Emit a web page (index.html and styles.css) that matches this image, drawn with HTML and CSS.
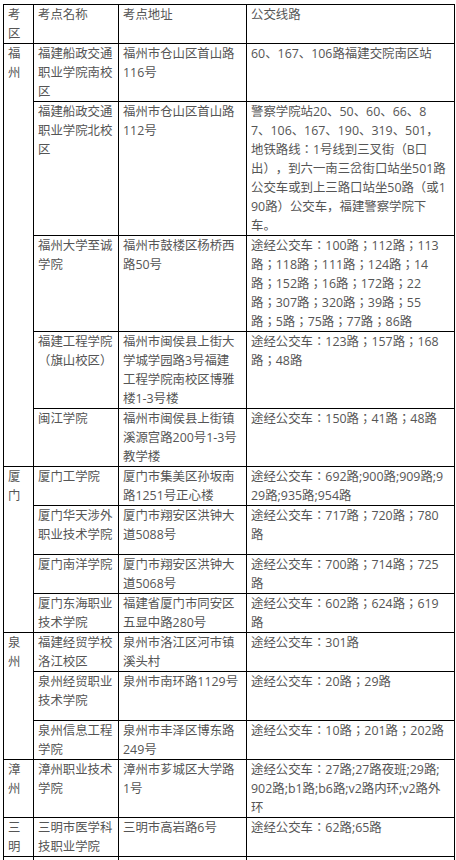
FILE: index.html
```html
<!DOCTYPE html>
<html lang="ja">
<head>
<meta charset="utf-8">
<title>考点公交线路</title>
<link rel="stylesheet" href="styles.css">
</head>
<body>
<table class="grid">
  <colgroup>
    <col class="c1"><col class="c2"><col class="c3"><col class="c4">
  </colgroup>
  <tr>
    <td>考区</td><td>考点名称</td><td class="addr">考点地址</td><td>公交线路</td>
  </tr>
  <tr>
    <td rowspan="5">福州</td>
    <td>福建船政交通职业学院南校区</td>
    <td class="addr">福州市仓山区首山路116号</td>
    <td>60、167、106路福建交院南区站</td>
  </tr>
  <tr>
    <td>福建船政交通职业学院北校区</td>
    <td class="addr">福州市仓山区首山路112号</td>
    <td>警察学院站20、50、60、66、8<br>7、106、167、190、319、501，<br>地铁路线：1号线到三叉街（B口<br>出），到六一南三岔街口站坐501路<br>公交车或到上三路口站坐50路（或1<br>90路）公交车，福建警察学院下<br>车。</td>
  </tr>
  <tr>
    <td>福州大学至诚学院</td>
    <td class="addr">福州市鼓楼区杨桥西路50号</td>
    <td>途经公交车：100路；112路；113<br>路；118路；111路；124路；14<br>路；152路；16路；172路；22<br>路；307路；320路；39路；55<br>路；5路；75路；77路；86路</td>
  </tr>
  <tr>
    <td>福建工程学院（旗山校区）</td>
    <td class="addr">福州市闽侯县上街大学城学园路3号福建工程学院南校区博雅楼1-3号楼</td>
    <td>途经公交车：123路；157路；168<br>路；48路</td>
  </tr>
  <tr>
    <td>闽江学院</td>
    <td class="addr">福州市闽侯县上街镇溪源宫路200号1-3号教学楼</td>
    <td>途经公交车：150路；41路；48路</td>
  </tr>
  <tr>
    <td rowspan="4">厦门</td>
    <td>厦门工学院</td>
    <td class="addr">厦门市集美区孙坂南路1251号正心楼</td>
    <td>途经公交车：692路;900路;909路;9<br>29路;935路;954路</td>
  </tr>
  <tr class="tall">
    <td>厦门华天涉外职业技术学院</td>
    <td class="addr">厦门市翔安区洪钟大道5088号</td>
    <td>途经公交车：717路；720路；780<br>路</td>
  </tr>
  <tr>
    <td>厦门南洋学院</td>
    <td class="addr">厦门市翔安区洪钟大道5068号</td>
    <td>途经公交车：700路；714路；725<br>路</td>
  </tr>
  <tr>
    <td>厦门东海职业技术学院</td>
    <td class="addr">福建省厦门市同安区五显中路280号</td>
    <td>途经公交车：602路；624路；619<br>路</td>
  </tr>
  <tr>
    <td rowspan="3">泉州</td>
    <td>福建经贸学校洛江校区</td>
    <td class="addr">泉州市洛江区河市镇溪头村</td>
    <td>途经公交车：301路</td>
  </tr>
  <tr class="tall">
    <td>泉州经贸职业技术学院</td>
    <td class="addr">泉州市南环路1129号</td>
    <td>途经公交车：20路；29路</td>
  </tr>
  <tr>
    <td>泉州信息工程学院</td>
    <td class="addr">泉州市丰泽区博东路249号</td>
    <td>途经公交车：10路；201路；202路</td>
  </tr>
  <tr>
    <td>漳州</td>
    <td>漳州职业技术学院</td>
    <td class="addr">漳州市芗城区大学路1号</td>
    <td>途经公交车：27路;27路夜班;29路;<br>902路;b1路;b6路;v2路内环;v2路外<br>环</td>
  </tr>
  <tr>
    <td>三明</td>
    <td>三明市医学科技职业学院</td>
    <td class="addr">三明市高岩路6号</td>
    <td>途经公交车：62路;65路</td>
  </tr>
  <tr class="tall">
    <td></td><td></td><td class="addr"></td><td></td>
  </tr>
</table>
</body>
</html>
```

FILE: styles.css
```css
html, body {
  margin: 0;
  padding: 0;
  background: #ffffff;
}

body {
  padding: 4px 0 0 3px;
  font-family: "Open Sans", "Noto Sans CJK JP", "Noto Sans CJK SC", sans-serif;
  font-size: 12.4px;
  line-height: 19px;
  color: #555555;
}

.grid {
  border-collapse: collapse;
  table-layout: fixed;
  width: 451px;
}

.c1 { width: 30px; }
.c2 { width: 85px; }
.c3 { width: 128px; }
.c4 { width: 208px; }

.grid td {
  border: 1px solid #000000;
  padding: 0 4px;
  vertical-align: top;
  word-break: break-all;
  text-align: left;
  text-spacing-trim: space-all;
}

.grid td.addr {
  padding-right: 6px;
}

.grid tr.tall td {
  height: 48px;
}
```
